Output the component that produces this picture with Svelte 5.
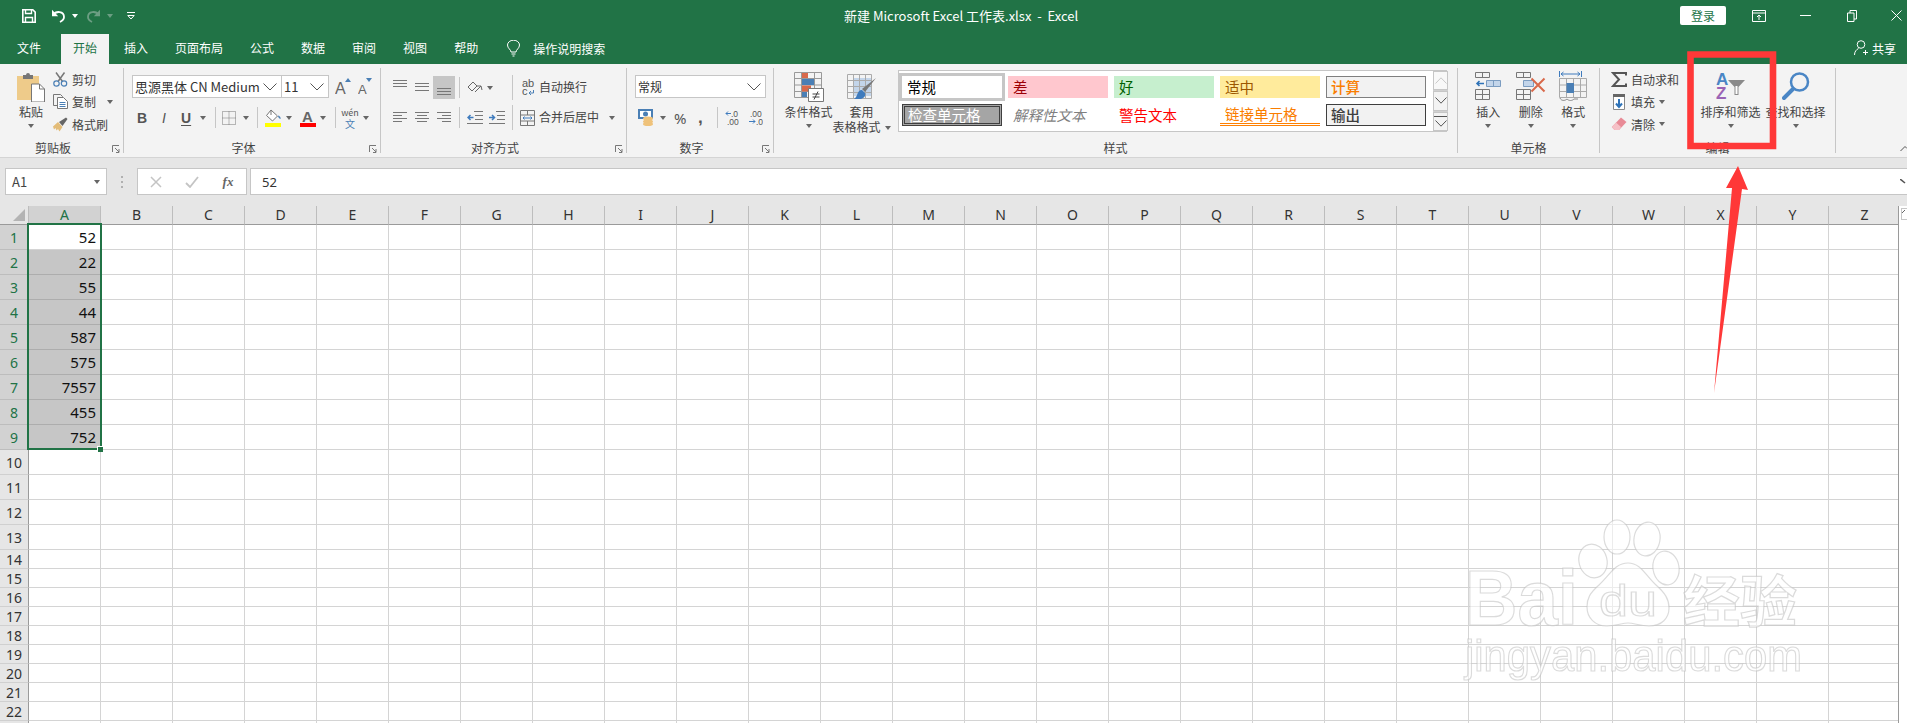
<script>
  const tabs = ['文件', '开始', '插入', '页面布局', '公式', '数据', '审阅', '视图', '帮助'];
  const cols = 'ABCDEFGHIJKLMNOPQRSTUVWXYZ'.split('');
  const rows = Array.from({ length: 23 }, (_, i) => i + 1);
  const values = ['52', '22', '55', '44', '587', '575', '7557', '455', '752'];
  const styles = [
    { name: '常规', cls: 'normal' },
    { name: '差', cls: 'bad' },
    { name: '好', cls: 'good' },
    { name: '适中', cls: 'neutral' },
    { name: '计算', cls: 'calc' },
    { name: '检查单元格', cls: 'check' },
    { name: '解释性文本', cls: 'explain' },
    { name: '警告文本', cls: 'warn' },
    { name: '链接单元格', cls: 'link' },
    { name: '输出', cls: 'output' }
  ];
</script>

{#snippet launcher()}
  <svg class="launcher" width="8" height="8" viewBox="0 0 8 8">
    <path d="M.5 7V.5H7M3 3l4 4M7 4v3.5H4" fill="none" stroke="#777" />
  </svg>
{/snippet}

{#snippet chevron()}
  <svg width="14" height="8" viewBox="0 0 14 8"><path d="M.5.5 7 7l6.500-6.500" fill="none" stroke="#555" /></svg>
{/snippet}

{#snippet lines(ys, x1s, x2s)}
  <svg width="14" height="23" viewBox="0 0 14 23">
    {#each ys as y, i}
      <path d="M{x1s[i]} {y}.5H{x2s[i]}" stroke="#777" />
    {/each}
  </svg>
{/snippet}

<div class="app">
  <div class="titlebar">
    <div class="qat">
      <svg width="14" height="14" viewBox="0 0 14 14">
        <path d="M.8.8h10l2.400 2.400v10H.8z" fill="none" stroke="#fff" stroke-width="1.600" />
        <path d="M3.500 1v3.500h6V1M3.500 13V8.500h7V13" fill="none" stroke="#fff" stroke-width="1.400" />
      </svg>
      <svg width="15" height="14" viewBox="0 0 15 14">
        <path d="M2 6c3-4.500 11-4 11 2 0 2.500-2 4-4 5" fill="none" stroke="#fff" stroke-width="1.800" />
        <path d="M1 .8v6.400h6.200z" fill="#fff" />
      </svg>
      <i class="caret white"></i>
      <svg width="15" height="14" viewBox="0 0 15 14">
        <path d="M13 6c-3-4.500-11-4-11 2 0 2.500 2 4 4 5" fill="none" stroke="#6c9e83" stroke-width="1.800" />
        <path d="M14 .8v6.400H7.800z" fill="#6c9e83" />
      </svg>
      <i class="caret dim"></i>
      <svg width="8" height="8" viewBox="0 0 8 8"><path d="M0 .5h8M.8 3.500 4 7l3.200-3.500z" fill="none" stroke="#fff" /></svg>
    </div>
    <div class="doc-title">新建 Microsoft Excel 工作表.xlsx  -  Excel</div>
    <div class="win">
      <span class="login">登录</span>
      <svg width="14" height="12" viewBox="0 0 14 12">
        <path d="M.5.5h13v11H.5zM.5 3h13M7 10V5M5 7l2-2 2 2" fill="none" stroke="#fff" />
      </svg>
      <svg width="11" height="2" viewBox="0 0 11 2"><path d="M0 .5h11" stroke="#fff" /></svg>
      <svg width="10" height="12" viewBox="0 0 10 12">
        <path d="M.5 3h6.500v8.500H.5zM3 3V.5h6.500V9H7" fill="none" stroke="#fff" />
      </svg>
      <svg width="11" height="11" viewBox="0 0 11 11"><path d="m.5.5 10 10m0-10-10 10" stroke="#fff" /></svg>
    </div>
  </div>

  <div class="tabs">
    {#each tabs as t}
      <span class="tab" class:active={t === '开始'}>{t}</span>
    {/each}
    <span class="tell">
      <svg width="13" height="17" viewBox="0 0 13 17">
        <path d="M4 12c0-2.500-3.500-3.500-3.500-7a6 4.800 0 0 1 12 0c0 3.500-3.500 4.500-3.500 7zM4.500 14h4M5.500 16h2" fill="none" stroke="#fff" />
      </svg>
      操作说明搜索
    </span>
    <span class="share">
      <svg width="14" height="16" viewBox="0 0 14 16">
        <circle cx="7" cy="4.500" r="3.800" fill="none" stroke="#fff" />
        <path d="M.5 15c0-3.500 2-5.500 4-6.500M9 12.500h5M11.500 10v5" fill="none" stroke="#fff" />
      </svg>
      共享
    </span>
  </div>

  <div class="ribbon">
    <!-- 剪贴板 -->
    <section class="group clip">
      <div class="body clip-body">
        <div class="big paste">
          <svg width="28" height="30" viewBox="0 0 28 30">
            <path d="M0 4h22v24H0z" fill="#eecb8a" />
            <path d="M6 3h3a2 2 0 0 1 4 0h3v4H6z" fill="#777" />
            <path d="M14.500 12h8l5 5v13h-13z" fill="#fff" stroke="#777" />
            <path d="M22.500 12v5h5" fill="none" stroke="#777" />
          </svg>
          <span>粘贴</span>
          <i class="caret"></i>
        </div>
        <div class="smalls">
          <div class="small">
            <svg width="15" height="15" viewBox="0 0 15 15">
              <path d="m3 .5 6.500 9M11.500.5 5 9.500" fill="none" stroke="#777" stroke-width="1.500" />
              <circle cx="3.500" cy="11.500" r="2.700" fill="none" stroke="#4a7fb5" stroke-width="1.200" />
              <circle cx="11" cy="11.500" r="2.700" fill="none" stroke="#4a7fb5" stroke-width="1.200" />
            </svg>
            <span>剪切</span>
          </div>
          <div class="small">
            <svg width="15" height="15" viewBox="0 0 15 15">
              <path d="M.5.5h7l2 2V3M.5.5v11H4" fill="none" stroke="#777" />
              <path d="M4.500 3.500h6l4 4v7h-10z" fill="#fff" stroke="#777" />
              <path d="M6.500 8.500h6M6.500 10.500h6M6.500 12.500h6" stroke="#4a7fb5" />
            </svg>
            <span>复制</span>
            <i class="caret after-copy"></i>
          </div>
          <div class="small">
            <svg width="15" height="15" viewBox="0 0 15 15">
              <path d="M0 9.500 5 5l4.500 5-3 4.500L5 12l-1.500 1.500L2.500 11 1 12.500z" fill="#e3bc78" />
              <path d="m6 5 3.500 4 5-7L13 .5z" fill="#666" />
            </svg>
            <span>格式刷</span>
          </div>
        </div>
      </div>
      <div class="label with-launcher">剪贴板</div>
      {@render launcher()}
    </section>

    <!-- 字体 -->
    <section class="group font">
      <div class="body">
        <div class="font-top">
          <div class="box font-name"><span>思源黑体 CN Medium</span>{@render chevron()}</div>
          <div class="box font-size"><span>11</span>{@render chevron()}</div>
          <svg class="grow" width="16" height="21" viewBox="0 0 16 21">
            <text x="0" y="18" class="icon-a big-a">A</text>
            <path d="m10 6 3-4 3 4z" fill="#4a7fb5" />
          </svg>
          <svg class="shrink" width="14" height="21" viewBox="0 0 14 21">
            <text x="0" y="18" class="icon-a small-a">A</text>
            <path d="M8 2h6l-3 4z" fill="#4a7fb5" />
          </svg>
        </div>
        <div class="tools font-tools">
          <b class="fmt">B</b>
          <em class="fmt">I</em>
          <u class="fmt">U</u>
          <i class="caret"></i>
          <i class="sep"></i>
          <svg width="14" height="14" viewBox="0 0 14 14">
            <path d="M.5.5h13v13H.5zM7 .5v13M.5 7h13" fill="none" stroke="#777" stroke-dasharray="1 1" />
          </svg>
          <i class="caret"></i>
          <i class="sep"></i>
          <svg width="17" height="18" viewBox="0 0 17 18">
            <path d="m6 1 6.500 6-5 5L1.500 6.500z" fill="#fff" stroke="#777" />
            <path d="M6 1v5" stroke="#777" />
            <path d="M13 6.500c2 .5 3 2 2.500 3.500-1.500-.5-2.500-1.500-2.500-3.500z" fill="#4a7fb5" />
            <path d="M0 14h16v4H0z" fill="#ffff00" />
          </svg>
          <i class="caret"></i>
          <svg width="16" height="18" viewBox="0 0 16 18">
            <text x="2" y="13" class="icon-a font-a">A</text>
            <path d="M0 14h16v4H0z" fill="#ff0000" />
          </svg>
          <i class="caret"></i>
          <i class="sep"></i>
          <span class="wen"><span>wén</span><span class="wen-zh">文</span></span>
          <i class="caret"></i>
        </div>
      </div>
      <div class="label with-launcher">字体</div>
      {@render launcher()}
    </section>

    <!-- 对齐方式 -->
    <section class="group align">
      <div class="body">
        <div class="tools align-top">
          {@render lines([4, 7, 10], [0, 0, 0], [14, 14, 14])}
          {@render lines([7, 10, 14], [0, 0, 0], [14, 14, 14])}
          <div class="align-on">{@render lines([12, 15, 18], [0, 0, 0], [14, 14, 14])}</div>
          <i class="sep short"></i>
          <svg width="16" height="14" viewBox="0 0 16 14">
            <path d="m1 6 5-5 4 4-5 5zM8 11l6-6M14 5l1 4M14 5l-4 0" fill="none" stroke="#666" />
          </svg>
          <i class="caret"></i>
          <i class="sep tall"></i>
          <svg width="13" height="21" viewBox="0 -3 13 21">
            <text x="0" y="7" class="icon-ab">ab</text>
            <text x="0" y="15" class="icon-ab">c</text>
            <path d="M11.500 10v3H7m2-2-2 2 2 2" fill="none" stroke="#4a7fb5" />
          </svg>
          <span class="txt">自动换行</span>
        </div>
        <div class="tools align-bottom">
          {@render lines([6, 9, 12, 15], [0, 0, 0, 0], [14, 9, 14, 9])}
          {@render lines([6, 9, 12, 15], [0, 2, 0, 2], [14, 12, 14, 12])}
          {@render lines([6, 9, 12, 15], [0, 5, 0, 5], [14, 14, 14, 14])}
          <i class="sep"></i>
          <svg width="16" height="13" viewBox="0 0 16 13">
            <path d="M7 .5h9M8 4.500h8M8 8.500h8M0 12.500h16" stroke="#777" fill="none" />
            <path d="M6.500 6.500H1m2.500-2.500L1 6.500 3.500 9" fill="none" stroke="#3f7bbd" stroke-width="1.500" />
          </svg>
          <svg width="16" height="13" viewBox="0 0 16 13">
            <path d="M7 .5h9M8 4.500h8M8 8.500h8M0 12.500h16" stroke="#777" fill="none" />
            <path d="M0 6.500h5.500M3 4l2.500 2.500L3 9" fill="none" stroke="#3f7bbd" stroke-width="1.500" />
          </svg>
          <i class="sep tall"></i>
          <svg width="15" height="16" viewBox="0 0 15 16">
            <path d="M.5.500h14v15H.5zM.5 5h14M.5 11h14M7.500.5V5M7.500 11v4.500" fill="none" stroke="#777" />
            <path d="M3 8h9M4.500 6.500 3 8l1.500 1.500M10.500 6.500 12 8l-1.500 1.500" fill="none" stroke="#3f7bbd" />
          </svg>
          <span class="txt">合并后居中</span>
          <i class="caret"></i>
        </div>
      </div>
      <div class="label with-launcher">对齐方式</div>
      {@render launcher()}
    </section>

    <!-- 数字 -->
    <section class="group number">
      <div class="body">
        <div class="box num-format"><span>常规</span>{@render chevron()}</div>
        <div class="tools num-tools">
          <svg width="16" height="17" viewBox="0 0 16 17">
            <path d="M0 0h15v10H0z" fill="#4a7fb5" />
            <path d="M2 2h11v6H2z" fill="#fff" />
            <circle cx="7.500" cy="5" r="2.500" fill="#4a7fb5" />
            <ellipse cx="10" cy="9.500" rx="5" ry="2" fill="#efc27a" />
            <ellipse cx="10" cy="12.500" rx="5" ry="2" fill="#efc27a" />
            <ellipse cx="10" cy="15" rx="5" ry="2" fill="#efc27a" />
          </svg>
          <i class="caret"></i>
          <span class="pct">%</span>
          <span class="comma">,</span>
          <i class="sep"></i>
          <svg width="15" height="19" viewBox="0 -2 15 19">
            <text x="6" y="6.500" class="icon-dec">.0</text>
            <text x="2" y="14.500" class="icon-dec">.00</text>
            <path d="M6 3.500H1m2-2-2 2 2 2" fill="none" stroke="#3f7bbd" />
          </svg>
          <svg width="15" height="19" viewBox="0 -2 15 19">
            <text x="2" y="6.500" class="icon-dec">.00</text>
            <text x="8" y="14.500" class="icon-dec">.0</text>
            <path d="M1 11.500h6m-2-2 2 2-2 2" fill="none" stroke="#3f7bbd" />
          </svg>
        </div>
      </div>
      <div class="label with-launcher">数字</div>
      {@render launcher()}
    </section>

    <!-- 样式 -->
    <section class="group styles">
      <div class="body styles-body">
        <div class="big cond">
          <svg width="30" height="30" viewBox="0 0 30 30">
            <path d="M.5.5h27v25H.5zM7.500.5v25M20.500.5v25M.5 6.500h27M.5 13h27M.5 19.500h27" fill="none" stroke="#999" />
            <path d="M8 1h6v5H8z" fill="#d8694a" />
            <path d="M8 7h12v6H8z" fill="#4a7fb5" />
            <path d="M8 13.500h9v6H8z" fill="#d8694a" />
            <path d="M8 20h5v5H8z" fill="#4a7fb5" />
            <path d="M14.500 16.500h15v13h-15z" fill="#fff" stroke="#777" />
            <path d="M18.500 22h7M18.500 25h7M24 19.500l-4 8" fill="none" stroke="#444" />
          </svg>
          <span>条件格式</span>
          <i class="caret"></i>
        </div>
        <div class="big table">
          <svg width="30" height="30" viewBox="0 0 30 30">
            <path d="M6 6h18v18H6z" fill="#c3d5ea" />
            <path d="M.5 2.500h24v24H.5zM.5 8.500h24M.5 14.500h24M.5 20.500h24M6.500 2.500v24M12.500 2.500v24M18.500 2.500v24" fill="none" stroke="#aaa" />
            <path d="M29 6 18 20l-3-3z" fill="#777" />
            <path d="M15 18c-3 0-4 2-5 5 -.5 2-2 3-3 4h7c3-1 5-3 4-6z" fill="#3f7bbd" />
          </svg>
          <span>套用</span>
          <span class="second">表格格式<i class="caret inline"></i></span>
        </div>
        <div class="gallery">
          <div class="gallery-grid">
            {#each styles as s}
              <div class="sty {s.cls}">{s.name}</div>
            {/each}
          </div>
          <div class="gallery-scroll">
            <div class="gs-btn up"><svg width="12" height="7" viewBox="0 0 12 7"><path d="M.5 6.500 6 .8l5.500 5.700" fill="none" stroke="#c8c8c8" /></svg></div>
            <div class="gs-btn"><svg width="12" height="7" viewBox="0 0 12 7"><path d="M.5.5 6 6.200 11.500.5" fill="none" stroke="#555" /></svg></div>
            <div class="gs-btn more"><i></i><svg width="12" height="7" viewBox="0 0 12 7"><path d="M.5.5 6 6.200 11.500.5" fill="none" stroke="#555" /></svg></div>
          </div>
        </div>
      </div>
      <div class="label">样式</div>
    </section>

    <!-- 单元格 -->
    <section class="group cells">
      <div class="body cells-body">
        <div class="big">
          <svg width="26" height="30" viewBox="0 0 26 30">
            <path d="M.5.5h14v5H.5zM7.500.5v5M.5 17.500h14v10H.5zM7.500 17.500v10M.5 22.500h14" fill="none" stroke="#777" />
            <path d="M11.500 8.500h14v6h-14zM18.500 8.500v6" fill="#c3d5ea" stroke="#7b9cc0" />
            <path d="M9 11.500H2m2.500-2.500L2 11.500 4.500 14" fill="none" stroke="#2f73b8" stroke-width="1.600" />
          </svg>
          <span>插入</span>
          <i class="caret"></i>
        </div>
        <div class="big">
          <svg width="30" height="30" viewBox="0 0 30 30">
            <path d="M.5.5h14v5H.5zM7.500.5v5M.5 17.500h14v10H.5zM7.500 17.500v10M.5 22.500h14" fill="none" stroke="#777" />
            <path d="M7.500 8.500h10v6h-10z" fill="#c3d5ea" stroke="#7b9cc0" />
            <path d="m15.500 6.500 13 13m0-13-13 13" stroke="#d8694a" stroke-width="2" />
          </svg>
          <span>删除</span>
          <i class="caret"></i>
        </div>
        <div class="big">
          <svg width="28" height="32" class="fmt-icon" viewBox="0 0 28 32">
            <path d="M.5 0v6M22.500 0v6M2 3h19M4.500 1 2 3l2.500 2M18.500 1 21 3l-2.500 2" fill="none" stroke="#3f7bbd" />
            <path d="M.5 7.500h27v19H.5zM7.500 7.500v19M14.500 7.500v19M21.500 7.500v19M.5 14h27M.5 20.500h27" fill="none" stroke="#aaa" />
            <path d="M7.500 12h7.500v10H7.500z" fill="#4a7fb5" />
            <path d="M1 27c1 3 5 3 7 1 2 2 5 2 7 0h4" fill="none" stroke="#888" />
          </svg>
          <span>格式</span>
          <i class="caret"></i>
        </div>
      </div>
      <div class="label">单元格</div>
    </section>

    <!-- 编辑 -->
    <section class="group edit">
      <div class="body edit-body">
        <div class="smalls edit-smalls">
          <div class="small">
            <svg width="16" height="15" viewBox="0 0 16 15">
              <path d="M15 3.500V1H2l6 6.500L2 14h13v-2.500" fill="none" stroke="#555" stroke-width="2" />
            </svg>
            <span>自动求和</span>
          </div>
          <div class="small">
            <svg width="16" height="16" viewBox="0 0 16 16">
              <path d="M2.500.5h11v15h-11z" fill="#fff" stroke="#888" />
              <path d="M2 0h12v3H2z" fill="#666" />
              <path d="M8 5v8M5 9.500 8 13l3-3.500" fill="none" stroke="#2f73b8" stroke-width="2" />
            </svg>
            <span>填充</span>
            <i class="caret"></i>
          </div>
          <div class="small">
            <svg width="16" height="14" viewBox="0 0 16 14">
              <path d="M10 .5 15.500 5 8 13H3.500L.8 10z" fill="#e88a96" />
              <path d="M5 5.500 10 10 8 13H3.500L.8 10z" fill="#f5c0c6" />
            </svg>
            <span>清除</span>
            <i class="caret"></i>
          </div>
        </div>
        <div class="big wide">
          <svg class="sort-icon" width="30" height="35" viewBox="0 -3 30 35">
            <text x="0" y="13" class="az a">A</text>
            <text x="0" y="27" class="az z">Z</text>
            <path d="M12 8h17l-6.500 7v8h-4v-8z" fill="#8a8a8a" />
            <path d="M19.500 14v8h2v-8z" fill="#fff" />
          </svg>
          <span class="wide-t">排序和筛选</span>
          <i class="caret"></i>
        </div>
        <div class="big wide">
          <svg width="28" height="30" viewBox="0 0 28 30">
            <circle cx="17.500" cy="10" r="8.500" fill="none" stroke="#4a86c5" stroke-width="2.500" />
            <path d="M11 17 2 26" stroke="#4a86c5" stroke-width="4" stroke-linecap="round" />
          </svg>
          <span class="wide-t">查找和选择</span>
          <i class="caret"></i>
        </div>
      </div>
      <div class="label">编辑</div>
    </section>
    <svg class="collapse" width="7" height="6" viewBox="0 0 7 6"><path d="M.5 5 5 .5l2 2" fill="none" stroke="#555" /></svg>
  </div>

  <div class="formula">
    <div class="name-box"><span>A1</span><i class="caret"></i></div>
    <div class="dots"><i></i><i></i><i></i></div>
    <div class="fx-box">
      <svg width="12" height="12" viewBox="0 0 12 12"><path d="m1 1 10 10m0-10L1 11" stroke="#c4c4c4" stroke-width="1.500" /></svg>
      <svg width="14" height="12" viewBox="0 0 14 12"><path d="m1 7 4 4 8-10" fill="none" stroke="#c4c4c4" stroke-width="1.800" /></svg>
      <span class="fx">fx</span>
    </div>
    <div class="input">
      <span>52</span>
      <svg width="7" height="5" viewBox="0 0 7 5"><path d="m0 0 5 4" fill="none" stroke="#555" stroke-width="1.600" /></svg>
    </div>
  </div>

  <div class="sheet">
    <div class="grid">
      <div class="corner">
        <svg width="12" height="12" viewBox="0 0 12 12"><path d="M12 0v12H0z" fill="#b4b4b4" /></svg>
      </div>
      {#each cols as c, i}
        <div class="ch" class:on={i === 0}>{c}</div>
      {/each}
      {#each rows as r}
        <div class="rh" class:on={r <= 9}>{r}</div>
        {#each cols as c, i}
          <div class="cell" class:sel={i === 0 && r >= 2 && r <= 9}>{i === 0 ? (values[r - 1] ?? '') : ''}</div>
        {/each}
      {/each}
      <div class="selection"><i class="handle"></i></div>
    </div>
    <div class="vscroll">
      <div class="vs-btn"><svg width="5" height="5" viewBox="0 0 5 5"><path d="M0 4 3 1" stroke="#666" /></svg></div>
    </div>
  </div>

  <!-- watermark and annotation drawn over the screenshot -->
  <svg class="overlay" width="1907" height="723" viewBox="0 0 1907 723">
    <g class="wm">
      <text x="1465" y="625" textLength="113" lengthAdjust="spacingAndGlyphs" class="wm-bai">Bai</text>
      <ellipse cx="1593" cy="561" rx="14" ry="17" transform="rotate(-15 1593 561)" />
      <ellipse cx="1617" cy="537" rx="13" ry="17" />
      <ellipse cx="1647" cy="539" rx="13" ry="17" transform="rotate(10 1647 539)" />
      <ellipse cx="1666" cy="568" rx="13" ry="17" transform="rotate(-10 1666 568)" />
      <path d="M1628 563c-13 0-18 12-29 22-9 8-12 13-12 22 0 11 8 19 20 19 9 0 15-3 21-3 6 0 12 3 21 3 13 0 20-8 20-18 0-9-4-15-13-23-11-10-15-22-28-22z" />
      <text x="1599" y="616" textLength="58" lengthAdjust="spacingAndGlyphs" class="wm-du">du</text>
      <text x="1683" y="622" textLength="114" lengthAdjust="spacingAndGlyphs" class="wm-jy">经验</text>
      <text x="1465" y="671" textLength="337" lengthAdjust="spacingAndGlyphs" class="wm-url">jingyan.baidu.com</text>
    </g>
    <path d="M1690.500 54.500h82.500v91.500h-82.500z" fill="none" stroke="#ff3838" stroke-width="6.600" />
    <path d="m1738 166 10 24-6-1-28 204 18-205-6 0z" fill="#ff3838" />
  </svg>
</div>

<style>
  :global(body) {
    margin: 0;
    background: #fff;
  }

  .app {
    position: relative;
    width: 1907px;
    height: 723px;
    overflow: hidden;
    font-family: "Noto Sans CJK SC", "Noto Sans", sans-serif;
    font-size: 12px;
    color: #444;
  }

  i { display: block; }

  .caret {
    width: 0;
    height: 0;
    border-left: 3.5px solid transparent;
    border-right: 3.5px solid transparent;
    border-top: 4px solid #666;
  }
  .caret.white { border-top-color: #fff; }
  .caret.dim { border-top-color: #6c9e83; }
  .caret.inline { display: inline-block; margin: 0 0 2px 4px; }

  .sep {
    width: 1px;
    height: 21px;
    background: #c6c6c6;
  }
  .sep.short { height: 21px; }
  .sep.tall { height: 25px; }

  /* title bar */
  .titlebar {
    display: flex;
    align-items: center;
    height: 31px;
    padding-bottom: 3px;
    background: #217346;
    color: #fff;
  }
  .qat {
    display: grid;
    grid-template-columns: 29px 21px 14px 21px 20px auto;
    align-items: center;
    justify-items: start;
    width: 822px;
    padding-left: 22px;
  }
  .doc-title {
    font-size: 13px;
    white-space: pre;
  }
  .win {
    display: grid;
    grid-template-columns: 72px 48px 47px 44px 16px;
    align-items: center;
    justify-items: start;
    margin-left: auto;
  }
  .login {
    width: 46px;
    height: 19px;
    line-height: 19px;
    text-align: center;
    background: #fff;
    border-radius: 2px;
    color: #217346;
  }

  /* tabs */
  .tabs {
    display: flex;
    gap: 3px;
    height: 30px;
    padding-left: 5px;
    background: #217346;
    color: #fff;
  }
  .tab {
    padding: 0 12px;
    line-height: 28px;
  }
  .tab:first-child { margin-right: 5px; }
  .tab.active {
    background: #f3f3f3;
    color: #217346;
  }
  .tell {
    display: flex;
    align-items: center;
    gap: 13px;
    height: 28px;
    margin-left: 14px;
  }
  .share {
    display: flex;
    align-items: center;
    gap: 4px;
    height: 28px;
    margin-left: auto;
    margin-right: 11px;
  }

  /* ribbon */
  .ribbon {
    position: relative;
    display: flex;
    align-items: flex-start;
    height: 89px;
    padding-top: 4px;
    background: #f3f3f3;
    border-bottom: 1px solid #d4d4d4;
  }
  .group {
    position: relative;
    flex: none;
    box-sizing: border-box;
    height: 85px;
    border-right: 1px solid #c6c6c6;
  }
  .clip { width: 124px; }
  .font { width: 257px; padding-left: 8px; }
  .align { width: 246px; padding-left: 12px; }
  .number { width: 147px; padding-left: 8px; }
  .styles { width: 684px; padding-left: 8px; }
  .cells { width: 142px; padding-left: 9px; }
  .edit { width: 236px; padding-left: 11px; }

  .body { height: 72px; }
  .label {
    position: absolute;
    left: 0;
    right: 0;
    bottom: -3px;
    line-height: 16px;
    text-align: center;
  }
  .label.with-launcher { right: 17px; }
  .launcher {
    position: absolute;
    right: 3px;
    bottom: 0;
  }
  .collapse {
    position: absolute;
    right: 0;
    bottom: 5px;
  }

  .big {
    display: flex;
    flex-direction: column;
    align-items: center;
    flex: none;
    padding-top: 4px;
  }
  .big > svg { height: 30px; }
  .big > span { line-height: 16px; margin-top: 2px; white-space: nowrap; }
  .big > .second { margin-top: -1px; }
  .big > .caret { margin-top: 4px; }
  .big > .fmt-icon { height: 32px; margin-top: -1px; margin-bottom: -1px; }
  .big > .sort-icon { height: 35px; margin-top: -3px; margin-bottom: -2px; }

  .smalls {
    display: flex;
    flex-direction: column;
    flex: none;
  }
  .small {
    display: flex;
    align-items: center;
    gap: 4px;
    height: 22.5px;
    white-space: nowrap;
  }
  .small > svg { flex: none; }

  .clip-body { display: flex; padding-left: 17px; }
  .paste { width: 28px; margin-right: 8px; }
  .after-copy { margin-left: 7px; }

  .tools {
    display: grid;
    grid-auto-flow: column;
    align-items: center;
    justify-items: start;
  }

  .box {
    display: flex;
    align-items: center;
    justify-content: space-between;
    box-sizing: border-box;
    height: 23px;
    background: #fff;
    border: 1px solid #c6c6c6;
    color: #333;
    font-size: 13px;
    white-space: nowrap;
  }

  /* font group */
  .font-top {
    display: flex;
    align-items: center;
    height: 23px;
    margin-top: 7px;
  }
  .font-name { width: 150px; padding: 0 4px 0 2px; }
  .font-size { width: 48px; margin-left: -1px; padding: 0 4px 0 2px; }
  .grow { margin-left: 6px; flex: none; }
  .shrink { margin-left: 7px; flex: none; }
  .icon-a { font-family: "Liberation Sans", sans-serif; fill: #666; }
  .big-a { font-size: 16px; }
  .small-a { font-size: 13px; }
  .font-a { font-size: 15px; font-weight: 700; }
  .font-tools {
    grid-template-columns: 22px 22px 19px 15px 7px 21px 14px 8px 21px 14px 20px 15px 7px 21px 10px;
    height: 27px;
    margin-top: 6px;
    padding-left: 5px;
  }
  .fmt {
    width: 10px;
    font-family: "Liberation Sans", sans-serif;
    font-size: 14px;
    line-height: 16px;
    text-align: center;
    color: #555;
  }
  b.fmt { font-weight: 700; }
  u.fmt { text-underline-offset: 2px; font-weight: 700; }
  .wen {
    display: flex;
    flex-direction: column;
    align-items: center;
    width: 16px;
    font-size: 9px;
    line-height: 11px;
    color: #555;
  }
  .wen-zh { color: #4a7fb5; font-size: 10px; }

  /* alignment group */
  .align-top {
    grid-template-columns: 22px 18px 26px 8px 20px 25px 10px 17px auto;
    height: 23px;
    margin-top: 7px;
  }
  .align-bottom {
    grid-template-columns: 22px 22px 22px 8px 22px 23px 8px 19px 70px auto;
    height: 27px;
    margin-top: 6px;
  }
  .align-on {
    box-sizing: border-box;
    width: 22px;
    height: 23px;
    padding-left: 4px;
    background: #c6c6c6;
  }
  .align-on svg { display: block; }
  .txt { white-space: nowrap; font-size: 12px; line-height: 16px; margin-top: -1px; }
  .icon-ab { font-family: "Liberation Sans", sans-serif; font-size: 11px; fill: #555; }

  /* number group */
  .num-format {
    width: 131px;
    margin-top: 7px;
    padding: 0 4px 0 2px;
    font-size: 12px;
  }
  .num-tools {
    grid-template-columns: 22px 14px 24px 19px 8px 23px 15px;
    height: 27px;
    margin-top: 6px;
    padding-left: 3px;
  }
  .pct { font-family: "Noto Sans", sans-serif; font-size: 15px; color: #555; }
  .comma { font-family: "Liberation Sans", sans-serif; font-size: 17px; font-weight: 700; line-height: 14px; color: #555; }
  .icon-dec { font-family: "Liberation Sans", sans-serif; font-size: 8.500px; fill: #555; }

  /* styles group */
  .styles-body { display: flex; align-items: flex-start; }
  .cond, .table { width: 53px; }
  .gallery {
    display: flex;
    box-sizing: border-box;
    width: 549px;
    height: 62px;
    margin: 2px 0 0 10px;
    background: #fff;
    border: 1px solid #c6c6c6;
  }
  .gallery-grid {
    display: grid;
    grid-template-columns: repeat(5, 100px);
    grid-auto-rows: 22px;
    gap: 6px;
    padding: 5px 3px;
  }
  .gallery-scroll {
    display: flex;
    flex-direction: column;
    width: 17px;
    margin-left: 4px;
    gap: 1px;
    background: #d0d0d0;
  }
  .gs-btn {
    display: flex;
    flex-direction: column;
    align-items: center;
    justify-content: center;
    flex: 1;
    background: #f3f3f3;
    border: 1px solid #c6c6c6;
  }
  .gs-btn.up { background: #f8f8f8; }
  .gs-btn.more i { width: 13px; height: 1px; margin-bottom: 3px; background: #555; }

  .sty {
    box-sizing: border-box;
    padding-left: 5px;
    font-size: 14.500px;
    line-height: 22px;
    white-space: nowrap;
  }
  .normal { color: #000; outline: 3px solid #c6c6c6; outline-offset: 0; }
  .bad { background: #ffc7ce; color: #9c0006; }
  .good { background: #c6efce; color: #006100; }
  .neutral { background: #ffeb9c; color: #9c5700; }
  .calc {
    padding-left: 4px;
    line-height: 20px;
    background: #f2f2f2;
    border: 1px solid #7f7f7f;
    color: #fa7d00;
    font-weight: 500;
  }
  .check {
    padding-left: 3px;
    line-height: 16px;
    background: #a5a5a5;
    border: 3px double #3f3f3f;
    color: #fff;
  }
  .explain { color: #7f7f7f; font-style: italic; }
  .warn { color: #ff0000; }
  .link {
    color: #fa7d00;
    line-height: 19px;
    border-bottom: 3px double #ff8001;
  }
  .output {
    padding-left: 4px;
    line-height: 20px;
    background: #f2f2f2;
    border: 1px solid #3f3f3f;
    color: #3f3f3f;
    font-weight: 500;
  }

  /* cells group */
  .cells-body { display: flex; }
  .cells-body .big { width: 42.500px; }

  /* editing group */
  .edit-body { display: flex; }
  .edit-smalls { width: 87px; }
  .big.wide { width: 65px; }
  .wide-t { font-size: 12px; }
  .az { font-family: "Liberation Sans", sans-serif; font-size: 17px; font-weight: 700; }
  .az.a { fill: #4a86c5; }
  .az.z { fill: #9a63b5; }

  /* formula bar */
  .formula {
    display: flex;
    align-items: stretch;
    box-sizing: border-box;
    height: 48px;
    padding: 10px 0 11px 5px;
    background: #e6e6e6;
  }
  .name-box {
    display: flex;
    align-items: center;
    justify-content: space-between;
    box-sizing: border-box;
    width: 102px;
    padding: 0 6px;
    background: #fff;
    border: 1px solid #c6c6c6;
    font-size: 13px;
  }
  .dots {
    display: flex;
    flex-direction: column;
    justify-content: center;
    gap: 3px;
    width: 30px;
    align-items: center;
  }
  .dots i { width: 2px; height: 2px; background: #b0b0b0; }
  .fx-box {
    display: grid;
    grid-template-columns: 36px 36px auto;
    align-items: center;
    justify-items: center;
    box-sizing: border-box;
    width: 110px;
    background: #fff;
    border: 1px solid #c6c6c6;
  }
  .fx {
    font-family: "Liberation Serif", serif;
    font-style: italic;
    font-weight: 700;
    font-size: 13px;
    color: #666;
  }
  .input {
    display: flex;
    align-items: center;
    justify-content: space-between;
    flex: 1;
    box-sizing: border-box;
    margin-left: 3px;
    padding-left: 11px;
    background: #fff;
    border: 1px solid #c6c6c6;
    border-right: 0;
    font-family: "Noto Sans", sans-serif;
    font-size: 13px;
    color: #333;
  }

  /* sheet */
  .sheet {
    display: flex;
    height: 517px;
    overflow: hidden;
    background: #fff;
  }
  .grid {
    position: relative;
    display: grid;
    grid-template-columns: 29px repeat(26, 72px);
    grid-template-rows: 19px repeat(13, 25px) repeat(10, 19px);
    box-sizing: border-box;
    flex: none;
    width: 1899px;
    overflow: hidden;
    font-family: "Noto Sans", sans-serif;
    border-right: 1px solid #9a9a9a;
  }
  .corner {
    display: flex;
    align-items: center;
    justify-content: flex-end;
    box-sizing: border-box;
    padding-right: 3px;
    background: #e6e6e6;
    border-right: 1px solid #bdbdbd;
    border-bottom: 1px solid #9a9a9a;
  }
  .ch {
    box-sizing: border-box;
    font-size: 14px;
    line-height: 18px;
    text-align: center;
    background: #e6e6e6;
    border-right: 1px solid #bdbdbd;
    border-bottom: 1px solid #9a9a9a;
    color: #333;
  }
  .ch.on { background: #d2d2d2; color: #217346; }
  .rh {
    box-sizing: border-box;
    font-size: 14px;
    line-height: 19px;
    display: flex;
    align-items: center;
    justify-content: center;
    background: #e6e6e6;
    border-right: 1px solid #9a9a9a;
    border-bottom: 1px solid #d0d0d0;
    color: #333;
  }
  .rh.on { background: #d2d2d2; color: #217346; border-bottom-color: #bdbdbd; }
  .cell {
    box-sizing: border-box;
    padding-right: 4px;
    font-size: 15px;
    line-height: 24px;
    text-align: right;
    color: #111;
    border-right: 1px solid #d4d4d4;
    border-bottom: 1px solid #d4d4d4;
  }
  .cell.sel {
    background: #c6c6c6;
    border-bottom-color: #adadad;
  }
  .selection {
    position: absolute;
    left: 27px;
    top: 17px;
    box-sizing: border-box;
    width: 75px;
    height: 227px;
    border: 2px solid #217346;
  }
  .handle {
    position: absolute;
    right: -3px;
    bottom: -4px;
    width: 5px;
    height: 5px;
    background: #217346;
    border: 1px solid #fff;
    border-right: 0;
    border-bottom: 0;
  }
  .vscroll { flex: 1; padding: 2px 0 0 2px; }
  .vs-btn {
    display: flex;
    box-sizing: border-box;
    height: 12px;
    background: #fff;
    border: 1px solid #c6c6c6;
    border-right: 0;
  }

  .overlay {
    position: absolute;
    left: 0;
    top: 0;
    pointer-events: none;
  }
  .wm {
    fill: rgba(255, 255, 255, 0.55);
    stroke: rgba(190, 190, 190, 0.55);
    stroke-width: 1.200px;
    filter: blur(0.5px);
  }
  .wm-bai {
    font-family: "Liberation Sans", sans-serif;
    font-weight: 700;
    font-size: 78px;
  }
  .wm-du {
    font-family: "Liberation Sans", sans-serif;
    font-size: 44px;
  }
  .wm-jy {
    font-family: "Noto Sans CJK SC", sans-serif;
    font-weight: 700;
    font-size: 56px;
  }
  .wm-url {
    font-family: "Liberation Sans", sans-serif;
    font-size: 45px;
  }
</style>
